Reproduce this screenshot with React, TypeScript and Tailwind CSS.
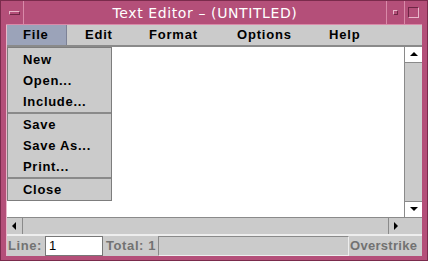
import React from "react";

const fileItems = [
  ["New", "Open...", "Include..."],
  ["Save", "Save As...", "Print..."],
  ["Close"],
];

function Arrow({ dir }: { dir: "up" | "down" | "left" | "right" }) {
  const pts = {
    up: "1,6 5,2 9,6",
    down: "1,2 5,6 9,2",
    left: "6,1 2,5 6,9",
    right: "2,1 6,5 2,9",
  }[dir];
  return (
    <svg width="10" height="10" viewBox="0 0 10 10">
      <polygon points={pts} fill="#000" />
    </svg>
  );
}

export default function App() {
  return (
    <div
      className="w-[428px] h-[261px] bg-[#b44f79] flex flex-col px-[5px] pb-[4px] border border-[#7a2b4c]"
      style={{ fontFamily: "'Liberation Sans', Arial, sans-serif" }}
    >
      {/* title bar */}
      <div className="h-[24px] flex items-stretch border-b border-[#d98aa9]">
        <div className="w-[18px] flex items-center justify-center border-r border-[#d98aa9]">
          <div className="w-[11px] h-[4px] border border-[#e9b7ca] border-b-[#6e2645] border-r-[#6e2645]" />
        </div>
        <div
          className="flex-1 text-center text-white text-[14px] tracking-[0.6px] leading-[24px]"
          style={{ fontFamily: "'DejaVu Sans', sans-serif" }}
        >
          Text Editor – (UNTITLED)
        </div>
        <div className="w-[18px] flex items-center justify-center border-l border-[#d98aa9]">
          <div className="w-[5px] h-[5px] border border-[#e9b7ca] border-b-[#6e2645] border-r-[#6e2645]" />
        </div>
        <div className="w-[18px] flex items-center justify-center border-l border-[#d98aa9]">
          <div className="w-[11px] h-[11px] border border-[#e9b7ca] border-t-[#6e2645] border-l-[#6e2645]" />
        </div>
      </div>

      <div className="flex-1 flex flex-col bg-[#cbcbcb] border-l border-[#e9b7ca]">
        {/* menu bar */}
        <div className="h-[22px] flex items-stretch border-b-2 border-[#8a8a8a] text-[13px] font-bold tracking-[0.8px]">
          <div className="w-[60px] bg-[#9ba3b9] border-r border-[#7d8296] flex items-center pl-[16px]">
            File
          </div>
          <div className="w-[64px] flex items-center pl-[18px]">Edit</div>
          <div className="w-[88px] flex items-center pl-[18px]">Format</div>
          <div className="w-[92px] flex items-center pl-[18px]">Options</div>
          <div className="flex-1 flex items-center pl-[18px]">Help</div>
        </div>

        {/* text area + scrollbars */}
        <div className="flex-1 relative flex flex-col">
          <div className="flex-1 flex">
            <div className="flex-1 bg-white" />
            <div className="w-[18px] flex flex-col border-l border-[#8a8a8a]">
              <div className="h-[16px] bg-white flex items-center justify-center border-b border-[#8a8a8a]">
                <Arrow dir="up" />
              </div>
              <div className="flex-1 bg-[#cbcbcb]" />
              <div className="h-[16px] bg-white flex items-center justify-center border-t border-[#8a8a8a]">
                <Arrow dir="down" />
              </div>
            </div>
          </div>
          <div className="h-[17px] flex border-t border-[#8a8a8a]">
            <div className="w-[16px] flex items-center justify-center border-r border-[#8a8a8a]">
              <Arrow dir="left" />
            </div>
            <div className="flex-1" />
            <div className="w-[16px] flex items-center justify-center border-l border-[#8a8a8a]">
              <Arrow dir="right" />
            </div>
            <div className="w-[18px]" />
          </div>

          {/* file dropdown */}
          <div className="absolute left-0 top-0 w-[105px] pt-[1px] bg-[#cbcbcb] border border-[#7d7d7d] text-[13px] font-bold tracking-[0.7px]">
            {fileItems.map((group, gi) => (
              <div key={gi} className={gi > 0 ? "border-t-2 border-[#8a8a8a]" : ""}>
                {group.map((item) => (
                  <div key={item} className="h-[21px] leading-[21px] pl-[15px]">
                    {item}
                  </div>
                ))}
              </div>
            ))}
          </div>
        </div>

        {/* status bar */}
        <div className="h-[22px] flex items-center border-t-2 border-[#eeeeee] text-[13px] font-bold tracking-[0.6px] text-[#727272]">
          <span className="pl-[1px] w-[38px]">Line:</span>
          <div className="w-[58px] h-[20px] bg-white border border-[#777] text-black font-normal leading-[18px] pl-[3px]">
            1
          </div>
          <span className="pl-[3px] w-[55px]">Total: 1</span>
          <div className="w-[191px] h-[20px] border border-[#8a8a8a] border-r-[#eee] border-b-[#eee]" />
          <span className="pl-[1px] tracking-[0.3px] whitespace-nowrap">Overstrike</span>
        </div>
      </div>
    </div>
  );
}
